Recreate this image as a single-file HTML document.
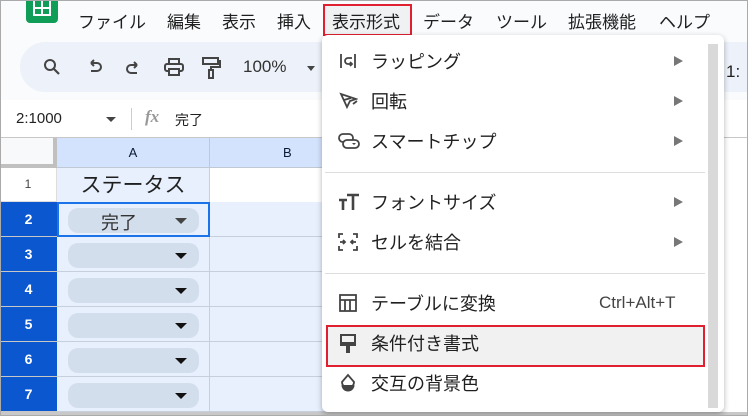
<!DOCTYPE html>
<html><head><meta charset="utf-8"><style>
*{margin:0;padding:0;box-sizing:border-box}
body{width:748px;height:416px;overflow:hidden;position:relative;background:#fff;font-family:"Liberation Sans","Noto Sans CJK JP",sans-serif;color:#1f1f1f}
.a{position:absolute}
.menu span{position:absolute;top:8px;font-size:17px}
.row{position:absolute;left:0;width:724px;height:35px}
.rh{position:absolute;left:0;width:57px;height:35px;background:#0b57d0;color:#fff;font-weight:bold;font-size:14px;text-align:center;line-height:35px;border-bottom:1px solid #c7c7c7}
.ca{position:absolute;left:57px;width:153px;height:35px;background:#e8f0fe;border-bottom:1px solid #c7cfdc;border-right:1px solid #c7cfdc}
.cb{position:absolute;left:210px;width:120px;height:35px;background:#e8f0fe;border-bottom:1px solid #c7cfdc}
.chip{position:absolute;left:11px;top:6px;width:131px;height:25px;border-radius:10px;background:#d3deec}
.tri{position:absolute;right:12px;top:10px;width:0;height:0;border-left:6px solid transparent;border-right:6px solid transparent;border-top:6px solid #111}
.it{position:absolute;left:322px;width:386px;height:40px}
.it .t{position:absolute;left:49px;top:7px;font-size:18px;color:#1f1f1f}
.it .ar{position:absolute;left:352px;top:15px;width:0;height:0;border-top:5px solid transparent;border-bottom:5px solid transparent;border-left:9px solid #777}
.it svg{position:absolute;left:16px;top:10px}
</style></head><body>
<div class="a" style="left:0;top:0;width:748px;height:100px;background:#f9fbfd"></div>
<div class="a" style="left:26px;top:0;width:32px;height:23px;background:#0f9d58;border-radius:0 0 4px 4px"></div>
<div class="a" style="left:33px;top:0;width:18px;height:16px;border:2px solid #fff;border-top:none"></div>
<div class="a" style="left:33px;top:7px;width:18px;height:2px;background:#fff"></div>
<div class="a" style="left:41px;top:0;width:2px;height:16px;background:#fff"></div>
<div class="menu">
<span style="left:78px">ファイル</span><span style="left:167px">編集</span><span style="left:222px">表示</span><span style="left:277px">挿入</span><span style="left:332px">表示形式</span><span style="left:423px">データ</span><span style="left:496px">ツール</span><span style="left:568px">拡張機能</span><span style="left:659px">ヘルプ</span>
</div>
<div class="a" style="left:323px;top:4px;width:89px;height:32px;border:2px solid #e02030;background:rgba(0,0,0,0.04)"></div>
<div class="a" style="left:20px;top:42px;width:760px;height:50px;background:#edf2fa;border-radius:25px"></div>
<svg class="a" style="left:42px;top:57px" width="20" height="20" viewBox="0 0 20 20"><circle cx="8" cy="8" r="5" fill="none" stroke="#444" stroke-width="2"/><path d="M12 12l5 5" stroke="#444" stroke-width="2.2"/></svg>
<svg class="a" style="left:86px;top:58px" width="18" height="18" viewBox="0 0 18 18"><path d="M5 5h6a4 4 0 0 1 0 8H5M5 5l3-3M5 5l3 3" fill="none" stroke="#444" stroke-width="2"/></svg>
<svg class="a" style="left:124px;top:58px" width="18" height="18" viewBox="0 0 18 18"><path d="M13 7H7a4 4 0 0 0 0 8h6M13 7l-3-3M13 7l-3 3" fill="none" stroke="#444" stroke-width="2"/></svg>
<svg class="a" style="left:163px;top:57px" width="22" height="20" viewBox="0 0 22 20"><rect x="6" y="2" width="10" height="5" fill="none" stroke="#444" stroke-width="2"/><rect x="2" y="7" width="18" height="7" rx="2" fill="none" stroke="#444" stroke-width="2"/><rect x="6" y="12" width="10" height="6" fill="#edf2fa" stroke="#444" stroke-width="2"/></svg>
<svg class="a" style="left:201px;top:56px" width="20" height="24" viewBox="0 0 20 24"><rect x="2" y="2" width="15" height="6" fill="none" stroke="#444" stroke-width="2"/><path d="M17 5h2v6h-9v3" fill="none" stroke="#444" stroke-width="2"/><rect x="8" y="14" width="4" height="8" fill="none" stroke="#444" stroke-width="2"/></svg>
<div class="a" style="left:243px;top:57px;font-size:17px;color:#333">100%</div>
<div class="a" style="left:307px;top:66px;border-left:4px solid transparent;border-right:4px solid transparent;border-top:5px solid #444"></div>
<div class="a" style="left:16px;top:110px;font-size:15px;color:#222">2:1000</div>
<div class="a" style="left:106px;top:117px;border-left:5px solid transparent;border-right:5px solid transparent;border-top:5px solid #444"></div>
<div class="a" style="left:131px;top:108px;width:1px;height:22px;background:#ccc"></div>
<div class="a" style="left:145px;top:107px;font-size:17px;color:#999;font-style:italic;font-family:'Liberation Serif',serif;font-weight:bold">fx</div>
<div class="a" style="left:175px;top:110px;font-size:14px">完了</div>
<div class="a" style="left:0;top:137px;width:748px;height:1px;background:#c7c7c7"></div>
<div class="a" style="left:0;top:138px;width:57px;height:30px;background:#f8f9fa;border-right:4px solid #c0c0c0;border-bottom:4px solid #c0c0c0"></div>
<div class="a" style="left:57px;top:138px;width:153px;height:30px;background:#d3e3fd;border-right:1px solid #c0c8d4;border-bottom:1px solid #c0c8d4;text-align:center;line-height:30px;font-size:13px;color:#0b1a33">A</div>
<div class="a" style="left:210px;top:138px;width:120px;height:30px;background:#d3e3fd;border-bottom:1px solid #c0c8d4;line-height:30px;font-size:13px;color:#0b1a33;padding-left:73px">B</div>
<div class="a" style="left:0;top:168px;width:57px;height:34px;background:#fff;border-right:1px solid #ddd;border-bottom:1px solid #ddd;text-align:center;line-height:32px;font-size:12px;color:#444">1</div>
<div class="a" style="left:57px;top:168px;width:153px;height:34px;background:#e8f0fe;border-right:1px solid #c7cfdc;text-align:center;font-size:21px;line-height:36px">ステータス</div>
<div class="row" style="top:202px"><div class="rh">2</div><div class="ca" style="border:2px solid #1a73e8"><div class="chip" style="left:9px;top:4px"><span style="position:absolute;left:33px;top:1px;font-size:18px;color:#333">完了</span><div class="tri" style="border-top-color:#444"></div></div></div><div class="cb"></div></div>
<div class="row" style="top:237px"><div class="rh">3</div><div class="ca"><div class="chip"><div class="tri"></div></div></div><div class="cb"></div></div>
<div class="row" style="top:272px"><div class="rh">4</div><div class="ca"><div class="chip"><div class="tri"></div></div></div><div class="cb"></div></div>
<div class="row" style="top:307px"><div class="rh">5</div><div class="ca"><div class="chip"><div class="tri"></div></div></div><div class="cb"></div></div>
<div class="row" style="top:342px"><div class="rh">6</div><div class="ca"><div class="chip"><div class="tri"></div></div></div><div class="cb"></div></div>
<div class="row" style="top:377px"><div class="rh">7</div><div class="ca"><div class="chip"><div class="tri"></div></div></div><div class="cb"></div></div>
<div class="a" style="left:0;top:412px;width:748px;height:4px;background:#c8c8c8"></div>
<div class="a" style="left:724px;top:54px;width:24px;height:38px"><span style="position:absolute;left:2px;top:8px;font-size:17px">1:</span></div>
<div class="a" style="left:322px;top:35px;width:402px;height:377px;background:#fff;border-radius:6px;box-shadow:0 2px 6px rgba(0,0,0,0.3)"></div>
<div class="a" style="left:708px;top:44px;width:10px;height:364px;background:#d9d9d9"></div>
<div class="a" style="left:325px;top:172px;width:380px;height:1px;background:#ddd"></div>
<div class="a" style="left:325px;top:273px;width:380px;height:1px;background:#ddd"></div>
<div class="a" style="left:326px;top:325px;width:379px;height:42px;background:#f1f1f1;border:2px solid #e02030"></div>
<div class="it" style="top:41px"><svg width="20" height="20" viewBox="0 0 20 20"><path d="M3 3v14M17 3v14M14 7h-4a3 3 0 0 0 0 6h3M12 11l2 2-2 2" fill="none" stroke="#444" stroke-width="1.8"/></svg><div class="t">ラッピング</div><div class="ar"></div></div>
<div class="it" style="top:81px"><svg width="20" height="20" viewBox="0 0 20 20"><path d="M3 3l6 13 3-6 6-2zM6 9l7-2M15 13l4-3" fill="none" stroke="#444" stroke-width="1.8"/></svg><div class="t">回転</div><div class="ar"></div></div>
<div class="it" style="top:121px"><svg width="22" height="20" viewBox="0 0 22 20"><rect x="1" y="3" width="14" height="8" rx="4" fill="none" stroke="#444" stroke-width="1.8"/><rect x="5" y="9" width="16" height="8" rx="4" fill="#fff" stroke="#444" stroke-width="1.8"/><path d="M14 12h4l-2 2z" fill="#444"/></svg><div class="t">スマートチップ</div><div class="ar"></div></div>
<div class="it" style="top:182px"><svg width="22" height="20" viewBox="0 0 22 20"><path d="M1 8h8M5 8v10M9 3h12M15 3v15" fill="none" stroke="#444" stroke-width="2.6"/></svg><div class="t">フォントサイズ</div><div class="ar"></div></div>
<div class="it" style="top:222px"><svg width="20" height="20" viewBox="0 0 20 20"><path d="M1 6V2h4M19 6V2h-4M1 14v4h4M19 14v4h-4M2 10h5M5 8l2 2-2 2M18 10h-5M15 8l-2 2 2 2" fill="none" stroke="#444" stroke-width="1.8"/></svg><div class="t">セルを結合</div><div class="ar"></div></div>
<div class="it" style="top:283px"><svg width="20" height="20" viewBox="0 0 20 20"><rect x="2" y="2" width="16" height="16" fill="none" stroke="#444" stroke-width="1.8"/><path d="M2 7h16M7 7v11M12 7v11" stroke="#444" stroke-width="1.8"/></svg><div class="t">テーブルに変換</div><div class="a" style="left:277px;top:10px;font-size:17px;color:#444">Ctrl+Alt+T</div></div>
<div class="it" style="top:323px"><svg width="20" height="22" viewBox="0 0 20 22"><rect x="3" y="2" width="14" height="10" fill="none" stroke="#444" stroke-width="2"/><rect x="3" y="9" width="14" height="4" fill="#444"/><rect x="8" y="13" width="4" height="7" fill="#444"/></svg><div class="t">条件付き書式</div></div>
<div class="it" style="top:363px"><svg width="20" height="20" viewBox="0 0 20 20"><path d="M10 2L4 9a6 6 0 1 0 12 0z" fill="none" stroke="#444" stroke-width="1.8"/><path d="M3.5 12h13a6 6 0 0 1-13 0z" fill="#444"/></svg><div class="t">交互の背景色</div></div>
<div class="a" style="left:0;top:0;width:748px;height:416px;border:1px solid #aaa;pointer-events:none"></div>
</body></html>
